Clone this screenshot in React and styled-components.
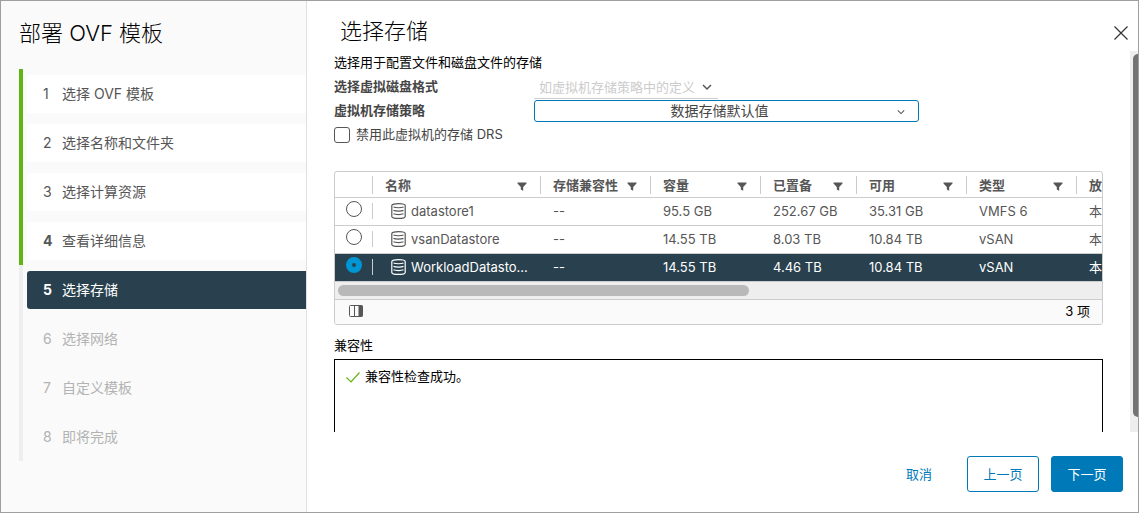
import { useState } from "react";
import styled, { createGlobalStyle } from "styled-components";

const GlobalStyle = createGlobalStyle`
  *, *::before, *::after {
    box-sizing: border-box;
  }

  body {
    margin: 0;
    background: #ffffff;
    color: #000000;
    font-family: Inter, "Noto Sans CJK SC", sans-serif;
    font-size: 13px;
    font-weight: 400;
    line-height: 24px;
  }

  button, select, input {
    margin: 0;
    font: inherit;
  }
`;

const Dialog = styled.div`
  display: flex;
  height: 100vh;
  border: 1px solid #9f9f9f;
`;

const Sidebar = styled.nav`
  flex: 0 0 306px;
  padding-left: 18px;
  background: #fafafa;
  border-right: 1px solid #e0e0e0;
`;

const SidebarTitle = styled.h1`
  margin: 0;
  height: 68px;
  padding-top: 20px;
  font-size: 22px;
  font-weight: 300;
  line-height: 24px;
`;

const StepList = styled.ol`
  margin: 0;
  padding: 0;
  list-style: none;
`;

const Step = styled.li`
  padding: 6px 0 5px 4px;
  border-left: 4px solid ${(props) => (props.$done ? "#60b515" : "#eeeeee")};
`;

const stepColors = {
  done: "#565656",
  active: "#ffffff",
  pending: "#b3b3b3",
};

const stepBackgrounds = {
  done: "#ffffff",
  active: "#29414e",
  pending: "transparent",
};

const StepButton = styled.button`
  display: flex;
  align-items: center;
  width: 100%;
  height: 38px;
  padding: 0 0 0 16px;
  border: 0;
  border-radius: 3px 0 0 3px;
  background: ${(props) => stepBackgrounds[props.$state]};
  color: ${(props) => stepColors[props.$state]};
  font-size: 14px;
  text-align: left;
`;

const StepNumber = styled.span`
  width: 19px;
  font-weight: ${(props) => (props.$bold ? 700 : 400)};
`;

const Main = styled.main`
  display: flex;
  flex: 1;
  flex-direction: column;
  min-width: 0;
`;

const MainHeader = styled.header`
  display: flex;
  justify-content: space-between;
  height: 50px;
  padding: 18px 9px 0 33px;
`;

const PageTitle = styled.h2`
  margin: 0;
  font-size: 22px;
  font-weight: 300;
  line-height: 24px;
`;

const CloseButton = styled.button`
  width: 16px;
  height: 28px;
  padding: 0;
  border: 0;
  background: none;
  line-height: 0;
`;

const Body = styled.div`
  display: flex;
  flex: 1;
  min-height: 0;
`;

const Content = styled.div`
  flex: 1;
  min-width: 0;
  padding: 0 27px;
  overflow-y: auto;
  scrollbar-width: none;
`;

const PageScroll = styled.div`
  width: 8px;
  padding: 3px 0 15px 3px;
  background: #eeeeee;
`;

const PageThumb = styled.div`
  height: 100%;
  border-radius: 5px 0 0 5px;
  background: #737373;
`;

const Line = styled.div`
  display: flex;
  align-items: center;
  height: 24px;
`;

const Intro = styled.p`
  margin: 0;
  height: 24px;
  line-height: 22px;
`;

const FieldLabel = styled.label`
  width: 200px;
  padding-bottom: 2px;
  color: #454545;
  font-weight: 600;
`;

const SelectBox = styled.div`
  position: relative;
  width: ${(props) => props.$width};
  color: #565656;

  svg {
    position: absolute;
    top: 8px;
    right: ${(props) => props.$inset};
    pointer-events: none;
  }
`;

const PlainSelect = styled.select`
  display: block;
  width: 100%;
  height: 24px;
  padding: 0 0 2px 5px;
  appearance: none;
  border: 0;
  border-bottom: 1px solid #d0d0d0;
  border-radius: 0;
  background: none;
  color: #cccccc;
  opacity: 1;
`;

const PolicySelect = styled.select`
  display: block;
  width: 100%;
  height: 22px;
  padding: 0 14px 0 0;
  appearance: none;
  border: 1px solid #0079b8;
  border-radius: 3px;
  background: #ffffff;
  color: #454545;
  font-size: 14px;
  line-height: 20px;
  text-align-last: center;
`;

const Checkbox = styled.input`
  width: 16px;
  height: 16px;
  margin-right: 6px;
  appearance: none;
  border: 1px solid #565656;
  border-radius: 3px;
  background: #ffffff;

  &:checked {
    background: #0079b8;
  }
`;

const CheckLabel = styled.label`
  padding-bottom: 2px;
  color: #454545;
`;

const Grid = styled.div`
  margin-top: 24px;
  overflow: hidden;
  border: 1px solid #cccccc;
  border-radius: 3px;
`;

const GridScroll = styled.div`
  overflow-x: auto;
  scrollbar-width: none;
`;

const Table = styled.table`
  width: 100%;
  min-width: 852px;
  table-layout: fixed;
  border-collapse: separate;
  border-spacing: 0;
`;

const HeadCell = styled.th`
  height: 26px;
  padding: 0;
  border-bottom: 1px solid #cccccc;
  color: #565656;
  font-weight: 600;
  text-align: left;
`;

const HeadInner = styled.div`
  display: flex;
  align-items: center;
  justify-content: space-between;
  height: 18px;
  padding: 0 13px 0 12px;
  border-right: 1px solid #cccccc;
  line-height: 16px;
  white-space: nowrap;

  svg {
    margin-top: 4px;
  }
`;

const Row = styled.tr`
  background: ${(props) => (props.$selected ? "#29414e" : "#ffffff")};
  color: ${(props) => (props.$selected ? "#ffffff" : "#565656")};
`;

const Cell = styled.td`
  height: 28px;
  padding: 0 12px 2px;
  border-bottom: 1px solid #cccccc;
  white-space: nowrap;
`;

const RadioCell = styled.td`
  padding: 3px 0 0;
  border-bottom: 1px solid #cccccc;
  vertical-align: top;
`;

const RadioInner = styled.div`
  display: flex;
  height: 18px;
  padding-left: 11px;
  background: linear-gradient(#cccccc, #cccccc) right bottom / 1px 16px no-repeat;
`;

const Radio = styled.input`
  width: 16px;
  height: 16px;
  appearance: none;
  border: 1px solid #565656;
  border-radius: 50%;
  background: #ffffff;

  &:checked {
    border: 6px solid #0095d3;
    background: #29414e;
  }
`;

const NameInner = styled.div`
  display: flex;
  align-items: center;
  gap: 5px;
  padding-left: 6px;

  svg {
    flex: none;
  }
`;

const NameText = styled.label`
  white-space: nowrap;
`;

const GridTrack = styled.div`
  height: 18px;
  padding: 3px;
  border-bottom: 1px solid #cccccc;
  background: #eeeeee;
`;

const GridThumb = styled.div`
  width: 54%;
  height: 11px;
  border-radius: 6px;
  background: #b9b9b9;
`;

const GridFooter = styled.div`
  display: flex;
  align-items: center;
  justify-content: space-between;
  height: 24px;
  padding: 0 12px 2px 14px;
  background: #fafafa;
`;

const ColumnsButton = styled.button`
  padding: 0;
  border: 0;
  background: none;
  line-height: 0;
`;

const SectionTitle = styled.div`
  margin-top: 8px;
`;

const Compatibility = styled.div`
  display: flex;
  align-items: flex-start;
  gap: 5px;
  height: 120px;
  margin-top: 2px;
  padding: 4px 11px;
  border: 1px solid #000000;

  svg {
    margin-top: 7px;
  }
`;

const Footer = styled.footer`
  display: flex;
  justify-content: flex-end;
  gap: 12px;
  height: 80px;
  padding: 24px 15px 0;
`;

const Button = styled.button`
  width: 72px;
  height: 36px;
  padding: 0;
  border: 1px solid ${(props) => (props.$kind === "link" ? "transparent" : "#0079b8")};
  border-radius: 3px;
  background: ${(props) => (props.$kind === "primary" ? "#0079b8" : "transparent")};
  color: ${(props) => (props.$kind === "primary" ? "#ffffff" : "#0079b8")};
`;

const steps = [
  "选择 OVF 模板",
  "选择名称和文件夹",
  "选择计算资源",
  "查看详细信息",
  "选择存储",
  "选择网络",
  "自定义模板",
  "即将完成",
];
const currentStep = 4;

const columns = [
  { title: "名称", width: 168 },
  { title: "存储兼容性", width: 110 },
  { title: "容量", width: 110 },
  { title: "已置备", width: 96 },
  { title: "可用", width: 110 },
  { title: "类型", width: 110 },
];

const datastores = [
  { name: "datastore1", values: ["--", "95.5 GB", "252.67 GB", "35.31 GB", "VMFS 6", "本地"] },
  { name: "vsanDatastore", values: ["--", "14.55 TB", "8.03 TB", "10.84 TB", "vSAN", "本地"] },
  { name: "WorkloadDatasto...", values: ["--", "14.55 TB", "4.46 TB", "10.84 TB", "vSAN", "本地"] },
];

function stepState(index) {
  if (index === currentStep) return "active";
  return index < currentStep ? "done" : "pending";
}

function Chevron({ width = 10, strokeWidth = 1.5 }) {
  return (
    <svg width={width} height="8" viewBox="0 0 10 8" fill="none" stroke="currentColor" strokeWidth={strokeWidth}>
      <path d="M1 2 L5 6 L9 2" />
    </svg>
  );
}

function Funnel() {
  return (
    <svg width="10" height="9" viewBox="0 0 10 9" fill="#565656">
      <path d="M0.5 0.5 H9.5 V1.5 L6.2 5 V8.8 L3.8 7.6 V5 L0.5 1.5 Z" />
    </svg>
  );
}

function DatastoreIcon() {
  return (
    <svg width="15" height="16" viewBox="0 0 15 16" fill="none" stroke="currentColor">
      <path strokeWidth="1.2" d="M0.8 2.6 C0.8 0 14.2 0 14.2 2.6 V13.4 C14.2 16 0.8 16 0.8 13.4 Z" />
      <path strokeWidth="1.2" d="M2.5 4 C4.5 5 10.5 5 12.5 4 M2.5 7.4 C4.5 8.4 10.5 8.4 12.5 7.4 M2.5 10.8 C4.5 11.8 10.5 11.8 12.5 10.8" />
    </svg>
  );
}

function ColumnsIcon() {
  return (
    <svg width="14" height="12" viewBox="0 0 14 12" fill="none" stroke="#565656">
      <rect x="0.5" y="0.5" width="13" height="11" rx="1" />
      <path d="M5.5 1 V11" />
      <rect x="10" y="1" width="3" height="10" fill="#565656" />
    </svg>
  );
}

function App() {
  const [selected, setSelected] = useState(2);

  return (
    <Dialog>
      <GlobalStyle />
      <Sidebar>
        <SidebarTitle>部署 OVF 模板</SidebarTitle>
        <StepList>
          {steps.map((step, i) => (
            <Step key={step} $done={i < currentStep}>
              <StepButton $state={stepState(i)} disabled={i > currentStep}>
                <StepNumber $bold={i === 3 || i === currentStep}>{i + 1}</StepNumber>
                {step}
              </StepButton>
            </Step>
          ))}
        </StepList>
      </Sidebar>
      <Main>
        <MainHeader>
          <PageTitle>选择存储</PageTitle>
          <CloseButton aria-label="关闭">
            <svg width="16" height="16" viewBox="0 0 16 16" stroke="#333333" strokeWidth="1.2">
              <path d="M1.5 1.5 L14.5 14.5 M14.5 1.5 L1.5 14.5" />
            </svg>
          </CloseButton>
        </MainHeader>
        <Body>
          <Content>
            <Intro>选择用于配置文件和磁盘文件的存储</Intro>
            <Line>
              <FieldLabel htmlFor="format">选择虚拟磁盘格式</FieldLabel>
              <SelectBox $width="184px" $inset="6px">
                <PlainSelect id="format" disabled>
                  <option>如虚拟机存储策略中的定义</option>
                </PlainSelect>
                <Chevron />
              </SelectBox>
            </Line>
            <Line>
              <FieldLabel htmlFor="policy">虚拟机存储策略</FieldLabel>
              <SelectBox $width="385px" $inset="14px">
                <PolicySelect id="policy">
                  <option>数据存储默认值</option>
                </PolicySelect>
                <Chevron width={8} strokeWidth={1.3} />
              </SelectBox>
            </Line>
            <Line>
              <Checkbox type="checkbox" id="drs" />
              <CheckLabel htmlFor="drs">禁用此虚拟机的存储 DRS</CheckLabel>
            </Line>
            <Grid>
              <GridScroll>
                <Table>
                  <colgroup>
                    <col width="38" />
                    {columns.map((column) => (
                      <col key={column.title} width={column.width} />
                    ))}
                    <col />
                  </colgroup>
                  <thead>
                    <tr>
                      <HeadCell>
                        <HeadInner />
                      </HeadCell>
                      {columns.map((column) => (
                        <HeadCell key={column.title}>
                          <HeadInner>
                            {column.title}
                            <Funnel />
                          </HeadInner>
                        </HeadCell>
                      ))}
                      <HeadCell>
                        <HeadInner>放置</HeadInner>
                      </HeadCell>
                    </tr>
                  </thead>
                  <tbody>
                    {datastores.map((store, i) => (
                      <Row key={store.name} $selected={selected === i}>
                        <RadioCell>
                          <RadioInner>
                            <Radio
                              type="radio"
                              name="datastore"
                              id={store.name}
                              checked={selected === i}
                              onChange={() => setSelected(i)}
                            />
                          </RadioInner>
                        </RadioCell>
                        <Cell>
                          <NameInner>
                            <DatastoreIcon />
                            <NameText htmlFor={store.name}>{store.name}</NameText>
                          </NameInner>
                        </Cell>
                        {store.values.map((value, j) => (
                          <Cell key={j}>{value}</Cell>
                        ))}
                      </Row>
                    ))}
                  </tbody>
                </Table>
              </GridScroll>
              <GridTrack>
                <GridThumb />
              </GridTrack>
              <GridFooter>
                <ColumnsButton aria-label="列">
                  <ColumnsIcon />
                </ColumnsButton>
                <span>3 项</span>
              </GridFooter>
            </Grid>
            <SectionTitle>兼容性</SectionTitle>
            <Compatibility>
              <svg width="14" height="12" viewBox="0 0 14 12" fill="none" stroke="#60b515" strokeWidth="1.2">
                <path d="M0.5 6.5 L5 11 L13.5 1.5" />
              </svg>
              兼容性检查成功。
            </Compatibility>
          </Content>
          <PageScroll>
            <PageThumb />
          </PageScroll>
        </Body>
        <Footer>
          <Button $kind="link">取消</Button>
          <Button $kind="outline">上一页</Button>
          <Button $kind="primary">下一页</Button>
        </Footer>
      </Main>
    </Dialog>
  );
}

export default App;
